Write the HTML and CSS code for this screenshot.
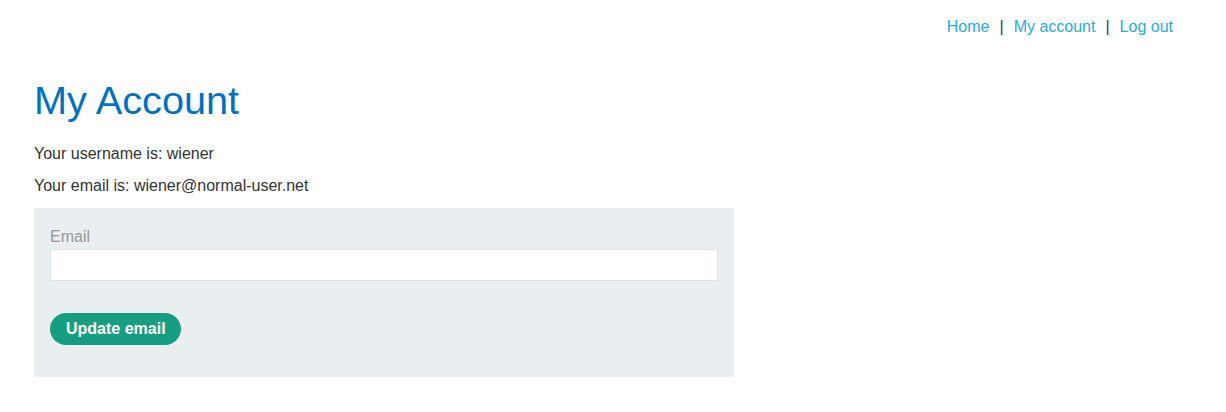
FILE: index.html
```html
<!DOCTYPE html>
<html lang="en">
<head>
    <meta charset="UTF-8">
    <title>My Account</title>
    <link rel="stylesheet" href="styles.css">
</head>
<body>
    <div class="page">
        <header class="top-nav">
            <a href="#">Home</a><span class="sep">|</span><a href="#">My account</a><span class="sep">|</span><a href="#">Log out</a>
        </header>

        <main>
            <h1>My Account</h1>
            <p class="info">Your username is: wiener</p>
            <p class="info">Your email is: wiener@normal-user.net</p>

            <form class="email-form">
                <label for="email">Email</label>
                <input type="email" id="email" name="email">
                <button type="submit" class="btn">Update email</button>
            </form>
        </main>
    </div>
</body>
</html>
```

FILE: styles.css
```css
body {
    margin: 0;
    font-family: 'Liberation Sans', Arial, sans-serif;
    color: #333332;
    background: #fff;
}

.page {
    padding: 17px 53px 0 34px;
}

.top-nav {
    display: flex;
    justify-content: flex-end;
    font-size: 16px;
    line-height: 20px;
}

.top-nav a {
    color: #29abe2;
    text-decoration: none;
}

.top-nav .sep {
    color: #1c3d72;
    margin: 0 10px;
}

h1 {
    margin: 38px 0 19px;
    font-size: 39.7px;
    line-height: 50px;
    font-weight: 400;
    color: #0071bc;
}

.info {
    margin: 0 0 12px;
    font-size: 16px;
    line-height: 20px;
}

.email-form {
    width: 700px;
    box-sizing: border-box;
    margin-top: 12px;
    padding: 19px 16px 32px;
    background: #e9eef1;
    display: flex;
    flex-direction: column;
    align-items: flex-start;
}

.email-form label {
    color: #999;
    font-size: 16px;
    line-height: 20px;
    margin-bottom: 2px;
}

.email-form input {
    width: 100%;
    height: 32px;
    box-sizing: border-box;
    border: 1px solid #dfe3e6;
    background: #fff;
    margin: 0 0 32px;
    font-family: inherit;
    font-size: 16px;
}

.btn {
    height: 32px;
    padding: 0 15px 0 16px;
    border: none;
    border-radius: 20px;
    background: #179d80;
    color: #fff;
    font-family: inherit;
    font-size: 16px;
    font-weight: 700;
    cursor: pointer;
}
```
